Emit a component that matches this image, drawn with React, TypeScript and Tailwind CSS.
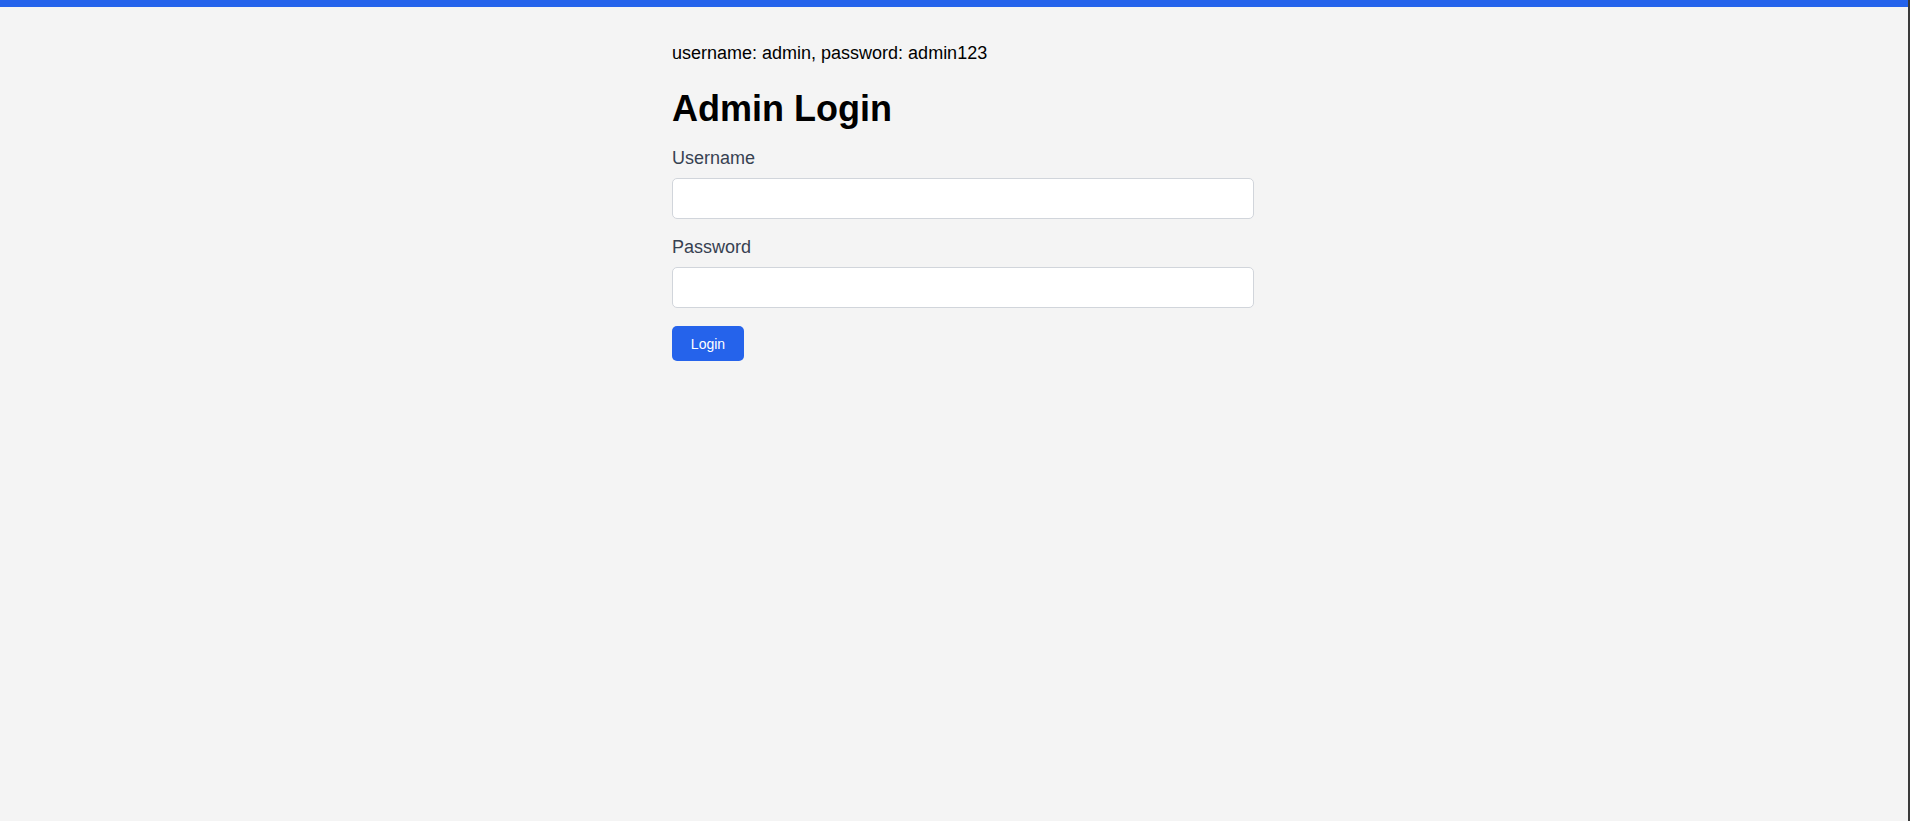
export default function App() {
  return (
    <div
      className="h-[821px] bg-[#f4f4f4] border-r-2 border-[#3a3a3a] text-black"
      style={{ fontFamily: '"Liberation Sans", Arial, sans-serif' }}
    >
      <div className="h-[7px] bg-[#2563eb]" />

      <div className="ml-[672px] w-[582px] pt-[33px]">
        <p className="text-[18px] leading-[27px]">username: admin, password: admin123</p>

        <h1 className="mt-[22px] text-[36px] leading-[40px] font-bold">Admin Login</h1>

        <form onSubmit={(e) => e.preventDefault()}>
          <label className="mt-[16px] block text-[18px] leading-[27px] text-[#374151]">Username</label>
          <input
            type="text"
            className="mt-[6px] block h-[41px] w-full rounded-[5px] border border-[#d1d5db] bg-white px-3 outline-none"
          />

          <label className="mt-[15px] block text-[18px] leading-[27px] text-[#374151]">Password</label>
          <input
            type="password"
            className="mt-[6px] block h-[41px] w-full rounded-[5px] border border-[#d1d5db] bg-white px-3 outline-none"
          />

          <button
            type="submit"
            className="mt-[18px] h-[35px] w-[72px] rounded-[5px] bg-[#2563eb] pt-[2px] text-[14px] text-white hover:bg-[#1d4ed8]"
          >
            Login
          </button>
        </form>
      </div>
    </div>
  );
}
